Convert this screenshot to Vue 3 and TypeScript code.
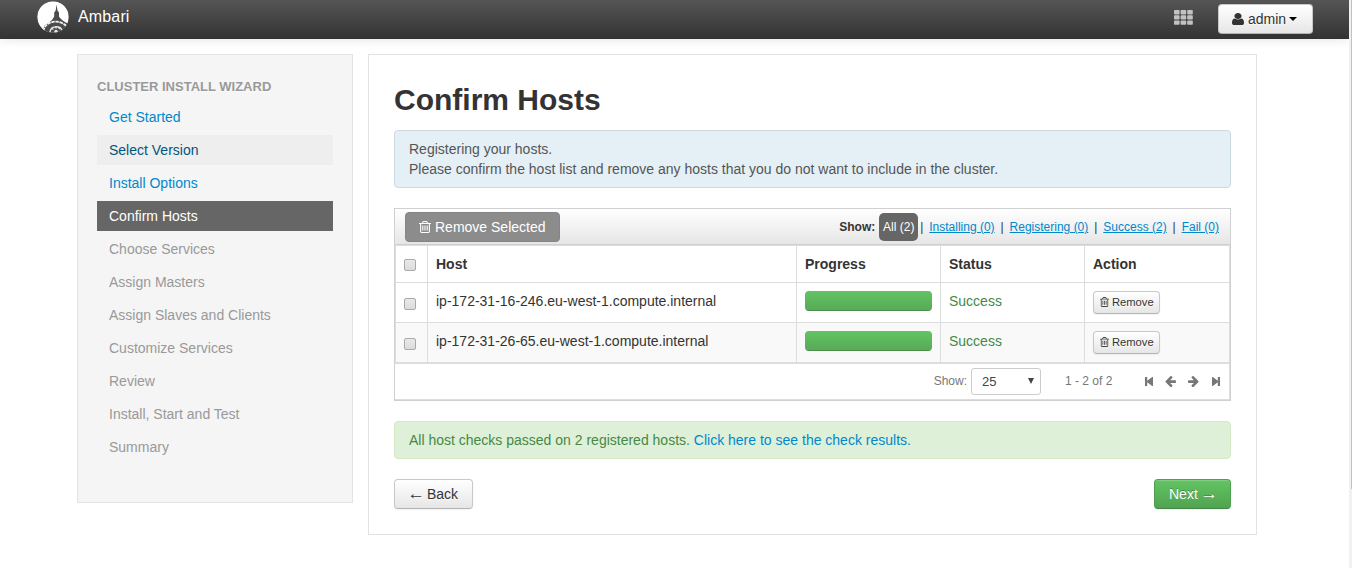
<script setup lang="ts">
import { ref } from 'vue'

interface Step { label: string; state: 'done' | 'hover' | 'active' | 'disabled' }
interface Host { name: string; status: string; progress: number }

const steps: Step[] = [
  { label: 'Get Started', state: 'done' },
  { label: 'Select Version', state: 'hover' },
  { label: 'Install Options', state: 'done' },
  { label: 'Confirm Hosts', state: 'active' },
  { label: 'Choose Services', state: 'disabled' },
  { label: 'Assign Masters', state: 'disabled' },
  { label: 'Assign Slaves and Clients', state: 'disabled' },
  { label: 'Customize Services', state: 'disabled' },
  { label: 'Review', state: 'disabled' },
  { label: 'Install, Start and Test', state: 'disabled' },
  { label: 'Summary', state: 'disabled' },
]

const hosts = ref<Host[]>([
  { name: 'ip-172-31-16-246.eu-west-1.compute.internal', status: 'Success', progress: 100 },
  { name: 'ip-172-31-26-65.eu-west-1.compute.internal', status: 'Success', progress: 100 },
])

const filters = ['Installing (0)', 'Registering (0)', 'Success (2)', 'Fail (0)']

const trash =
  'M704 736v576q0 14-9 23t-23 9h-64q-14 0-23-9t-9-23v-576q0-14 9-23t23-9h64q14 0 23 9t9 23zm256 0v576q0 14-9 23t-23 9h-64q-14 0-23-9t-9-23v-576q0-14 9-23t23-9h64q14 0 23 9t9 23zm256 0v576q0 14-9 23t-23 9h-64q-14 0-23-9t-9-23v-576q0-14 9-23t23-9h64q14 0 23 9t9 23zm128 724v-948h-896v948q0 22 7 40.5t14.5 27 10.5 8.5h832q3 0 10.5-8.5t14.5-27 7-40.5zm-672-1076h448l-48-117q-7-9-17-11h-317q-10 2-17 11zm928 32v64q0 14-9 23t-23 9h-96v948q0 83-47 143.5t-113 60.5h-832q-66 0-113-58.5t-47-141.5v-952h-96q-14 0-23-9t-9-23v-64q0-14 9-23t23-9h309l70-167q15-37 54-63t79-26h320q40 0 79 26t54 63l70 167h309q14 0 23 9t9 23z'
const user =
  'M1536 1399q0 109-62.5 187t-150.5 78h-854q-88 0-150.5-78t-62.5-187q0-85 8.5-160.5t31.5-152 58.5-131 94-89 134.5-34.5q131 128 313 128t313-128q76 0 134.5 34.5t94 89 58.5 131 31.5 152 8.5 160.5zm-256-887q0 159-112.5 271.5t-271.5 112.5-271.5-112.5-112.5-271.5 112.5-271.5 271.5-112.5 271.5 112.5 112.5 271.5z'
const arrow =
  'M1664 896v128q0 53-32.5 90.5t-84.5 37.5h-704l293 294q38 36 38 90t-38 90l-75 76q-37 37-90 37-52 0-91-37l-651-652q-37-37-37-90 0-52 37-91l651-650q38-38 91-38 52 0 90 38l75 74q38 38 38 91t-38 91l-293 293h704q52 0 84.5 37.5t32.5 90.5z'
</script>

<template>
  <div class="screen">
    <div class="page">
      <header class="navbar">
        <svg class="logo" viewBox="0 0 32 32">
          <defs><clipPath id="disc"><circle cx="16" cy="16" r="15.8" /></clipPath></defs>
          <g clip-path="url(#disc)">
            <circle cx="16" cy="16" r="15.8" fill="#fff" />
            <path d="M19.6 3.5L20.5 9.5L22 11.5V15.5Q24 19 30.5 22.5L32 32H5L7.5 24.5Q15 20.5 17.2 15.5V11.5L18.7 9.5Z" fill="#4c4c4c" />
            <path d="M6.5 30A12.4 10 0 0 1 29.5 25.5" fill="none" stroke="#f4f4f4" stroke-width="1.7" stroke-dasharray="3.4 .7" />
            <path d="M13 31A6.2 5.6 0 0 1 25 29.5" fill="none" stroke="#e8e8e8" stroke-width="1.4" />
            <path d="M19 25v2.5M14.5 26.8l1.8 1.8M23.4 26l-1.6 2" stroke="#e8e8e8" stroke-width="1.3" />
            <circle cx="19" cy="30.3" r="1.6" fill="#e8e8e8" />
          </g>
        </svg>
        <span class="brand">Ambari</span>
        <svg class="grid-icon" viewBox="0 0 19 15" fill="#c2c2c2">
          <template v-for="r in 3" :key="r">
            <rect v-for="c in 3" :key="c" :x="(c - 1) * 6.6" :y="(r - 1) * 5.2" width="5.6" height="4.4" rx="0.8" />
          </template>
        </svg>
        <button class="btn admin">
          <svg class="user-icon" viewBox="256 128 1280 1536" preserveAspectRatio="none"><path :d="user" fill="#333" /></svg>
          <span>admin</span><i class="caret"></i>
        </button>
      </header>

      <div class="content">
        <aside class="sidebar">
          <div class="nav-header">CLUSTER INSTALL WIZARD</div>
          <a v-for="s in steps" :key="s.label" class="step" :class="s.state">{{ s.label }}</a>
        </aside>

        <main class="panel">
          <h1>Confirm Hosts</h1>
          <div class="alert info">Registering your hosts.<br />Please confirm the host list and remove any hosts that you do not want to include in the cluster.</div>

          <section class="hosts">
            <div class="toolbar">
              <button class="remove-selected">
                <svg class="trash" viewBox="192 128 1408 1536" preserveAspectRatio="none"><path :d="trash" fill="#fff" /></svg>Remove Selected
              </button>
              <div class="filters">
                <b>Show:</b><span class="all">All (2)</span>
                <template v-for="f in filters" :key="f"><span class="sep">|</span><a>{{ f }}</a></template>
              </div>
            </div>
            <table>
              <colgroup><col class="c-check" /><col class="c-host" /><col class="c-mid" /><col class="c-mid" /><col /></colgroup>
              <thead>
                <tr><th><span class="check"></span></th><th>Host</th><th>Progress</th><th>Status</th><th>Action</th></tr>
              </thead>
              <tbody>
                <tr v-for="h in hosts" :key="h.name">
                  <td><span class="check"></span></td>
                  <td>{{ h.name }}</td>
                  <td><div class="progress"><div class="bar" :style="{ width: h.progress + '%' }"></div></div></td>
                  <td class="ok">{{ h.status }}</td>
                  <td>
                    <button class="btn mini"><svg class="trash" viewBox="192 128 1408 1536"><path :d="trash" fill="#444" /></svg>Remove</button>
                  </td>
                </tr>
              </tbody>
            </table>
            <div class="footer">
              <span>Show:</span>
              <div class="select"><span>25</span><i></i></div>
              <span class="range">1 - 2 of 2</span>
              <div class="pager">
                <svg class="step-icon" viewBox="0 0 8 9"><path d="M0 0H2.2V3.8L7.2 0H8V9H7.2L2.2 5.2V9H0Z" /></svg>
                <svg class="arrow-icon" viewBox="128 200 1536 1500"><path :d="arrow" /></svg>
                <svg class="arrow-icon flip" viewBox="128 200 1536 1500"><path :d="arrow" /></svg>
                <svg class="step-icon flip" viewBox="0 0 8 9"><path d="M0 0H2.2V3.8L7.2 0H8V9H7.2L2.2 5.2V9H0Z" /></svg>
              </div>
            </div>
          </section>

          <div class="alert success">All host checks passed on 2 registered hosts. <a>Click here to see the check results.</a></div>
          <div class="actions">
            <button class="btn back"><span class="arr">←</span>&nbsp;Back</button>
            <button class="btn next">Next&nbsp;<span class="arr">→</span></button>
          </div>
        </main>
      </div>
    </div>
    <div class="scrollbar"><div class="thumb"></div></div>
  </div>
</template>

<style>
body { margin: 0; background: #fff; overflow: hidden; }
</style>

<style scoped>
* { box-sizing: border-box; }
.screen { display: flex; width: 1352px; height: 568px; font: 14px/20px "Liberation Sans", Arial, sans-serif; color: #333; }
.page { width: 1349px; }
.scrollbar { width: 3px; background: #f1f1f1; padding-left: 2px; }
.thumb { height: 489px; background: #c1c1c1; }
button { font: inherit; margin: 0; }
svg { display: block; flex: none; }
a { color: #0088cc; }

.navbar { display: flex; align-items: flex-start; height: 39px; padding-left: 37px; background: linear-gradient(#555, #333); box-shadow: 0 1px 10px rgba(0, 0, 0, .1); }
.logo { width: 32px; height: 32px; margin-top: 1px; }
.brand { margin: 7px 0 0 9px; font-size: 16px; letter-spacing: .15px; color: #fff; }
.grid-icon { width: 19px; height: 15px; margin: 10px 25px 0 auto; }
.btn { display: flex; align-items: center; height: 30px; border: 1px solid #ccc; border-color: #c8c8c8 #c8c8c8 #b3b3b3; border-radius: 4px; background: linear-gradient(#fff, #e6e6e6); color: #333; text-shadow: 0 1px 1px rgba(255, 255, 255, .75); box-shadow: inset 0 1px 0 rgba(255, 255, 255, .2), 0 1px 2px rgba(0, 0, 0, .05); }
.admin { width: 95px; margin: 4px 36px 0 0; padding: 0 0 0 13px; }
.user-icon { width: 12px; height: 12px; margin-right: 4px; }
.caret { margin-left: 3px; border: 4px solid transparent; border-top-color: #000; border-bottom: 0; }

.content { display: flex; align-items: flex-start; gap: 15px; padding: 15px 0 0 77px; }
.sidebar { width: 276px; height: 449px; padding: 22px 19px 0; border: 1px solid #e3e3e3; background: #f5f5f5; }
.nav-header { height: 25px; font-size: 13px; font-weight: bold; color: #999; white-space: nowrap; text-shadow: 0 1px 0 rgba(255, 255, 255, .5); }
.step { display: block; height: 30px; margin-bottom: 3px; padding: 5px 12px; }
.step.hover { background: #eee; color: #005580; }
.step.active { background: #666; color: #fff; }
.step.disabled { color: #999; }

.panel { width: 889px; height: 481px; padding: 25px 25px 24px; border: 1px solid #e3e3e3; background: #fff; }
h1 { margin: 0 0 10px; font-size: 30px; line-height: 40px; }
.alert { padding: 8px 14px; border: 1px solid; border-radius: 4px; }
.info { margin-bottom: 20px; background: #e4f0f5; border-color: #c9dbe1; color: #555; }
.success { margin-bottom: 20px; background: #dff0d8; border-color: #d6e9c6; color: #468847; }

.hosts { height: 193px; margin-bottom: 20px; border: 1px solid #d0d0d0; }
.toolbar { display: flex; align-items: flex-start; justify-content: space-between; height: 36px; padding: 3px 11px 0 10px; border-bottom: 1px solid #d0d0d0; background: linear-gradient(#fff, #e6e6e6); }
.remove-selected { display: flex; align-items: center; width: 155px; height: 30px; padding: 0 0 0 13px; border: 1px solid #858585; border-radius: 4px; background: #8c8c8c; color: #fff; white-space: nowrap; }
.remove-selected .trash { width: 12px; height: 12px; margin-right: 4px; }
.filters { display: flex; align-items: center; height: 28px; margin-top: 1px; font-size: 12px; white-space: nowrap; }
.filters b { margin-right: 4px; margin-left: 1px; }
.filters a { text-decoration: underline; }
.all { height: 28px; width: 39px; text-align: center; line-height: 28px; border-radius: 5px; background: #666; color: #fff; }
.sep { width: 15px; text-align: center; }
.all + .sep { width: 11px; padding-right: 4px; }

table { width: 835px; table-layout: fixed; border-collapse: separate; border-spacing: 0; border-right: 1px solid #ddd; border-bottom: 1px solid #ddd; }
.c-check { width: 32px; }
.c-host { width: 369px; }
.c-mid { width: 144px; }
th, td { padding: 8px 8px 0; border-left: 1px solid #ddd; border-top: 1px solid #ddd; text-align: left; vertical-align: top; white-space: nowrap; }
th { height: 37px; }
td { height: 40px; }
tbody tr:nth-child(2) td { background: #f9f9f9; }
.check { display: block; width: 12px; height: 12px; margin-top: 5px; border: 1px solid #aaa; border-radius: 2px; background: linear-gradient(#e9e9e9, #dcdcdc); }
td .check { margin-top: 7px; }
.progress { width: 127px; height: 20px; border-radius: 4px; overflow: hidden; }
.bar { height: 20px; background: linear-gradient(#62c462, #57a957); box-shadow: inset 0 -1px 0 rgba(0, 0, 0, .15); }
.ok { color: #468847; }
.mini { width: 67px; height: 23px; padding: 0 0 1px 6px; font-size: 11.2px; }
.mini .trash { width: 9px; height: 10px; margin-right: 3px; }

.footer { display: flex; align-items: center; height: 37px; padding: 0 9px 1px 0; border: 1px solid #ddd; border-width: 1px 1px 1px 0; justify-content: flex-end; font-size: 12px; color: #777; white-space: nowrap; }
.select { display: flex; align-items: center; justify-content: space-between; width: 70px; height: 27px; margin: 1px 24px 0 4px; padding: 1px 6px 0 10px; border: 1px solid #ccc; border-radius: 3px; font-size: 13px; color: #444; }
.select i { border: 3.5px solid transparent; border-top: 6px solid #444; border-bottom: 0; margin-bottom: 3px; }
.range { width: 80px; }
.pager { display: flex; align-items: center; fill: #777; }
.step-icon { width: 8px; height: 9px; }
.arrow-icon { width: 11px; height: 11px; margin-left: 12px; }
.arrow-icon + .step-icon { margin-left: 13px; }
.flip { transform: scaleX(-1); }

.actions { display: flex; justify-content: space-between; }
.back { width: 79px; padding: 0 14px; }
.next { width: 77px; padding: 0 14px; border-color: #4f9f4f #4f9f4f #428442; background: linear-gradient(#62c462, #51a351); color: #fff; text-shadow: 0 -1px 0 rgba(0, 0, 0, .25); }
.back, .next { white-space: nowrap; }
.arr { display: inline-block; font-family: "Liberation Serif", serif; transform: scale(1.25); }
</style>
